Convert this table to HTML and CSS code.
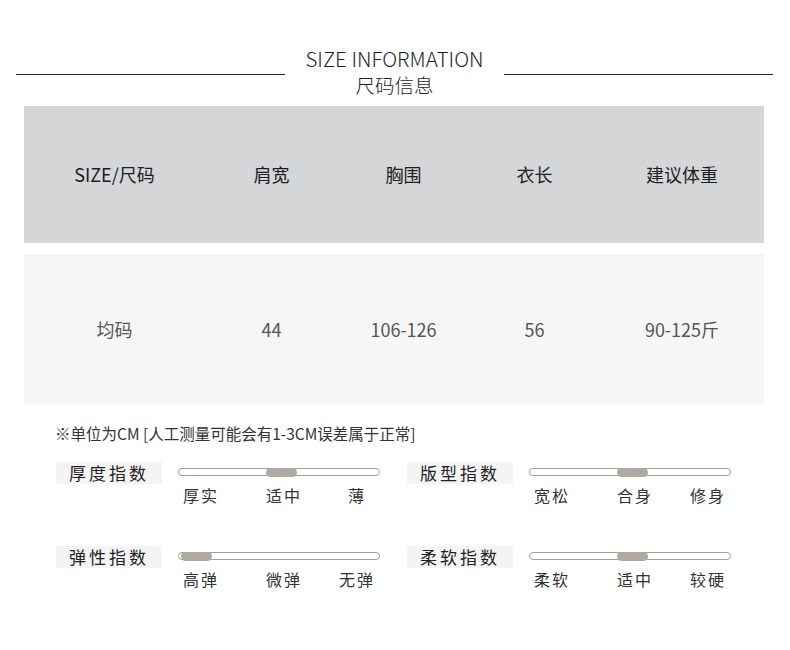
FILE: index.html
```html
<!DOCTYPE html>
<html lang="zh-CN">
<head>
<meta charset="utf-8">
<title>尺码信息</title>
<link rel="stylesheet" href="styles.css">
</head>
<body>
<header class="title">
  <div class="rule"></div>
  <div class="title-text">
    <div class="en">SIZE INFORMATION</div>
    <div class="zh">尺码信息</div>
  </div>
  <div class="rule"></div>
</header>

<section class="table">
  <div class="row head">
    <div class="cell">SIZE/尺码</div>
    <div class="cell">肩宽</div>
    <div class="cell">胸围</div>
    <div class="cell">衣长</div>
    <div class="cell">建议体重</div>
  </div>
  <div class="row body">
    <div class="cell">均码</div>
    <div class="cell">44</div>
    <div class="cell">106-126</div>
    <div class="cell">56</div>
    <div class="cell">90-125斤</div>
  </div>
</section>

<p class="note">※单位为CM [人工测量可能会有1-3CM误差属于正常]</p>

<section class="indexes">
  <div class="index">
    <div class="tag">厚度指数</div>
    <div class="scale">
      <div class="track"><div class="thumb mid"></div></div>
      <div class="labels"><span class="l1">厚实</span><span class="l2">适中</span><span class="l3">薄</span></div>
    </div>
  </div>
  <div class="index">
    <div class="tag">版型指数</div>
    <div class="scale">
      <div class="track"><div class="thumb mid"></div></div>
      <div class="labels"><span class="l1">宽松</span><span class="l2">合身</span><span class="l3">修身</span></div>
    </div>
  </div>
  <div class="index">
    <div class="tag">弹性指数</div>
    <div class="scale">
      <div class="track"><div class="thumb start"></div></div>
      <div class="labels"><span class="l1">高弹</span><span class="l2">微弹</span><span class="l3">无弹</span></div>
    </div>
  </div>
  <div class="index">
    <div class="tag">柔软指数</div>
    <div class="scale">
      <div class="track"><div class="thumb mid"></div></div>
      <div class="labels"><span class="l1">柔软</span><span class="l2">适中</span><span class="l3">较硬</span></div>
    </div>
  </div>
</section>
</body>
</html>
```
FILE: styles.css
```css
* { box-sizing: border-box; }

html, body {
  margin: 0;
  padding: 0;
  background: #ffffff;
}

body {
  width: 790px;
  font-family: "Noto Sans CJK SC", "Noto Sans", sans-serif;
  color: #222222;
}

/* ---------- title ---------- */
.title {
  display: flex;
  align-items: flex-start;
  padding: 45px 17px 0 16px;
}

.rule {
  flex: 1;
  height: 1px;
  margin-top: 29px;
  background: #2a2a2a;
}

.title-text {
  width: 219px;
  text-align: center;
  font-weight: 300;
  color: #1e1e1e;
}

.title-text .en {
  font-size: 20.5px;
  line-height: 26px;
}

.title-text .zh {
  font-size: 19.5px;
  line-height: 26px;
  margin-top: 1px;
}

/* ---------- table ---------- */
.table {
  margin: 8px 26px 0 24px;
}

.row {
  display: grid;
  grid-template-columns: 181px 133px 131px 131px 164px;
  align-items: center;
  text-align: center;
  font-size: 18px;
}

.row.head {
  height: 137px;
  padding-bottom: 2px;
  background: #d5d6d8;
  color: #1e1e1e;
}

.row.body {
  height: 151px;
  margin-top: 11px;
  padding-bottom: 2px;
  background: #f6f6f6;
  color: #555555;
}

/* ---------- note ---------- */
.note {
  margin: 17px 0 0 0;
  padding-left: 55px;
  font-size: 15.5px;
  line-height: 22px;
  color: #333333;
}

/* ---------- indexes ---------- */
.indexes {
  display: grid;
  grid-template-columns: 324px 324px;
  column-gap: 27px;
  row-gap: 41px;
  margin-top: 18px;
  padding-left: 56px;
}

.index {
  display: flex;
  align-items: flex-start;
  gap: 16px;
}

.tag {
  width: 106px;
  height: 22px;
  line-height: 22px;
  background: #f4f4f4;
  text-align: center;
  font-size: 17px;
  letter-spacing: 3px;
  color: #222222;
}

.scale {
  width: 202px;
}

.track {
  position: relative;
  height: 8px;
  margin-top: 6px;
  border: 1px solid #a0a0a0;
  border-radius: 5px;
  background: #ffffff;
}

.thumb {
  position: absolute;
  top: -1.5px;
  width: 31px;
  height: 9px;
  border-radius: 5px;
  background: #aeaa9f;
}

.thumb.mid { left: 87px; }
.thumb.start { left: 2px; }

.labels {
  display: flex;
  margin-top: 9px;
  font-size: 16px;
  line-height: 20px;
  letter-spacing: 2px;
  color: #333333;
}

.labels span {
  width: 40px;
  text-align: center;
  white-space: nowrap;
}

.labels .l1 { margin-left: 3px; }
.labels .l2 { margin-left: 43px; }
.labels .l3 { margin-left: 33px; }
```
